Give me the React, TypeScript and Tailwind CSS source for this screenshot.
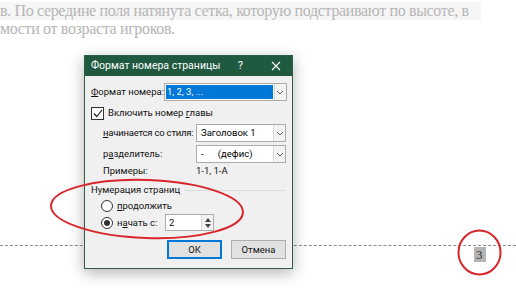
import React from 'react';

const ui = { fontFamily: 'Roboto, "Noto Sans", sans-serif' };

const Arrow: React.FC = () => (
    <div className="w-[12px] h-full border-l border-[#d9d9d9] bg-[#f3f3f3] flex items-center justify-center shrink-0">
        <svg width="8" height="5" viewBox="0 0 8 5">
            <path d="M1 1 L4 4 L7 1" stroke="#606060" strokeWidth="1" fill="none" />
        </svg>
    </div>
);

const Select: React.FC<{ value: string; highlight?: boolean; width: string }> = ({ value, highlight, width }) => (
    <div className={`h-[18px] ${width} shrink-0 ml-auto border border-[#acacac] bg-white flex items-stretch`}>
        <div className="flex-1 flex items-center px-[1px] overflow-hidden">
            {highlight ? (
                <span className="bg-[#0078d7] text-white w-full h-[14px] leading-[14px] pl-[1px]">{value}</span>
            ) : (
                <span className="pl-[3px] text-black whitespace-pre">{value}</span>
            )}
        </div>
        <Arrow />
    </div>
);

const Radio: React.FC<{ checked?: boolean }> = ({ checked }) => (
    <div className="w-[12px] h-[12px] rounded-full border border-[#333] bg-white flex items-center justify-center shrink-0">
        {checked && <div className="w-[6px] h-[6px] rounded-full bg-[#333]" />}
    </div>
);

const Dialog: React.FC = () => (
    <div
        className="absolute left-[84px] top-[55px] w-[209px] h-[214px] bg-[#f0f0f0] border border-[#2b5f46] shadow-[0_4px_14px_rgba(0,0,0,0.3)] text-[9.5px] leading-[14px] text-[#111] flex flex-col whitespace-nowrap"
        style={ui}
    >
        {/* Title bar */}
        <div className="h-[20px] shrink-0 bg-[#1f5a40] text-white text-[10.5px] flex items-center pl-[6px] pr-[11px]">
            <span className="flex-1">Формат номера страницы</span>
            <span className="mr-[28px] text-[11px]">?</span>
            <svg width="10" height="10" viewBox="0 0 10 10">
                <path d="M1 1 L9 9 M9 1 L1 9" stroke="#fff" strokeWidth="1.1" />
            </svg>
        </div>

        <div className="flex flex-col pl-[6px] pr-[6px] pt-[7px]">
            <div className="flex items-center h-[18px]">
                <span><u>Ф</u>ормат номера:</span>
                <Select value="1, 2, 3, ..." highlight width="w-[123px]" />
            </div>

            <div className="flex items-center gap-[4px] mt-[5px] h-[14px]">
                <div className="w-[13px] h-[13px] border border-[#333] bg-white flex items-center justify-center">
                    <svg width="10" height="9" viewBox="0 0 10 9">
                        <path d="M1 4.5 L3.8 7.5 L9 1" stroke="#222" strokeWidth="1.2" fill="none" />
                    </svg>
                </div>
                <span>Включить номер <u>г</u>лавы</span>
            </div>

            <div className="flex flex-col pl-[12px]">
                <div className="flex items-center h-[18px] mt-[4px]">
                    <span className="tracking-[-0.2px]"><u>н</u>ачинается со стиля:</span>
                    <Select value="Заголовок 1" width="w-[90px]" />
                </div>
                <div className="flex items-center h-[18px] mt-[3px]">
                    <span>р<u>а</u>зделитель:</span>
                    <Select value="-      (дефис)" width="w-[90px]" />
                </div>
                <div className="flex items-center h-[16px]">
                    <span className="w-[93px]">Примеры:</span>
                    <span>1-1, 1-А</span>
                </div>
            </div>

            <div className="flex items-center mt-[4px] gap-[4px] h-[14px]">
                <span>Нумерация страниц</span>
                <div className="flex-1 h-px bg-[#dcdcdc]" />
            </div>

            <div className="flex flex-col pl-[10px]">
                <div className="flex items-center gap-[4px] h-[14px] mt-[2px]">
                    <Radio />
                    <span><u>п</u>родолжить</span>
                </div>
                <div className="flex items-center gap-[4px] h-[17px] mt-[1px]">
                    <Radio checked />
                    <span className="w-[44px]">н<u>а</u>чать с:</span>
                    <div className="w-[49px] h-[17px] border border-[#acacac] bg-white flex items-stretch">
                        <span className="flex-1 pl-[3px] leading-[15px]">2</span>
                        <div className="w-[12px] border-l border-[#d9d9d9] bg-[#f3f3f3] flex flex-col items-center justify-center gap-[2px]">
                            <svg width="6" height="4" viewBox="0 0 6 4"><path d="M0 4 L3 0 L6 4 Z" fill="#444" /></svg>
                            <svg width="6" height="4" viewBox="0 0 6 4"><path d="M0 0 L3 4 L6 0 Z" fill="#444" /></svg>
                        </div>
                    </div>
                </div>
            </div>

            <div className="flex justify-end gap-[9px] mt-[9px]">
                <button className="w-[55px] h-[19px] border-2 border-[#0078d7] bg-[#e1e1e1] text-[9.5px]">ОК</button>
                <button className="w-[55px] h-[19px] border border-[#adadad] bg-[#e1e1e1] text-[9.5px]">Отмена</button>
            </div>
        </div>
    </div>
);

const App: React.FC = () => {
    return (
        <div className="relative w-[516px] h-[290px] bg-white overflow-hidden">
            {/* Document page behind the dialog */}
            <div
                className="flex flex-col text-[16px] leading-[18px] tracking-[-0.35px] text-[#b5b5b5] pt-[2px]"
                style={{ fontFamily: '"Liberation Serif", serif' }}
            >
                <div className="bg-[#f6f6f6] w-[481px] whitespace-nowrap overflow-hidden">
                    в. По середине поля натянута сетка, которую подстраивают по высоте, в
                </div>
                <div className="whitespace-nowrap">мости от возраста игроков.</div>
            </div>

            <div className="mt-[207px] border-t border-dashed border-[#8a8a8a] w-full" />
            <div className="flex justify-end pr-[30px] mt-[1px]">
                <span
                    className="bg-[#b4b4b4] text-[#333] text-[13px] leading-[15px] px-[2px] w-[12px]"
                    style={{ fontFamily: '"Liberation Serif", serif' }}
                >
                    3
                </span>
            </div>

            <Dialog />

            {/* Red annotation marks */}
            <svg className="absolute inset-0 pointer-events-none" width="516" height="290">
                <ellipse cx="147" cy="209" rx="96" ry="29" transform="rotate(2 147 209)" fill="none" stroke="#d8262b" strokeWidth="2" />
                <ellipse cx="479.5" cy="252.5" rx="21" ry="22" fill="none" stroke="#d8262b" strokeWidth="2" />
            </svg>
        </div>
    );
};

export default App;
